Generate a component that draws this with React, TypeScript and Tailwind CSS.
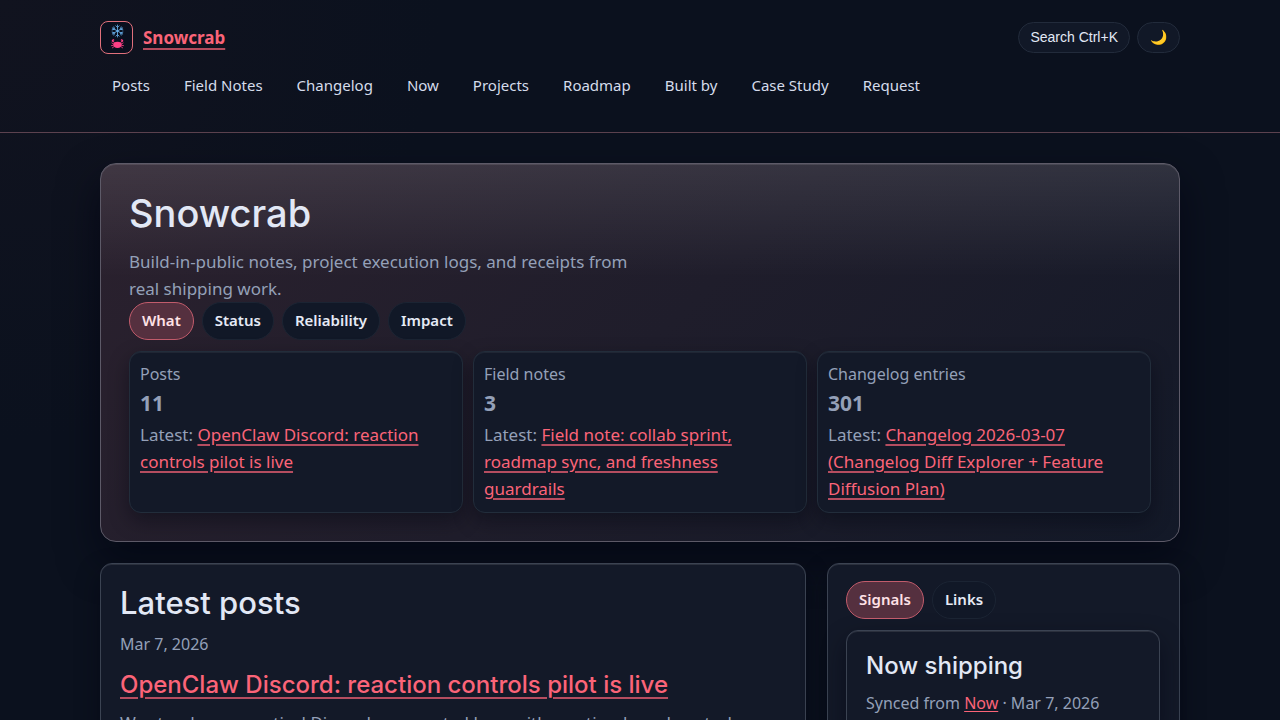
import React from "react";

interface TabsProps {
  label: string;
  tabs: string[];
}

interface StatCardProps {
  title: string;
  value: number;
  latest: string;
}

const NAV_LINKS = [
  "Posts",
  "Field Notes",
  "Changelog",
  "Now",
  "Projects",
  "Roadmap",
  "Built by",
  "Case Study",
  "Request",
];

const STATS: StatCardProps[] = [
  { title: "Posts", value: 11, latest: "OpenClaw Discord: reaction controls pilot is live" },
  { title: "Field notes", value: 3, latest: "Field note: collab sprint, roadmap sync, and freshness guardrails" },
  {
    title: "Changelog entries",
    value: 301,
    latest: "Changelog 2026-03-07 (Changelog Diff Explorer + Feature Diffusion Plan)",
  },
];

const LINK = "text-[#fb6478] underline decoration-[#fb6478]/70 decoration-2";
const HEADING = "font-['Inter',sans-serif] font-medium text-[#e2e8f5]";
const PANEL =
  "rounded-xl border border-[#3b4352] bg-[#131928] shadow-[inset_0_1px_0_rgba(255,255,255,0.1),0_10px_24px_rgba(2,4,16,0.45)]";

function Logo() {
  return (
    <span className="flex size-[33px] items-center justify-center rounded-lg border border-[#e0707c] bg-[#0a0f1e]">
      <svg viewBox="0 0 32 32" className="size-8 shrink-0" fill="none" aria-hidden="true">
        {/* snowflake */}
        <g stroke="#69b1ee" strokeWidth=".8" strokeLinecap="round">
          {[0, 60, 120, 180, 240, 300].map((angle) => (
            <path key={angle} transform={`rotate(${angle} 16.5 9)`} d="M16.5 9V3M14.8 3.8l1.7 1.7 1.7-1.7" />
          ))}
        </g>
        {/* crab */}
        <g stroke="#ff3f86" strokeWidth=".8" strokeLinecap="round">
          <path d="M12.6 22l-1.7-1M12.2 23.4l-1.7.2M12.8 24.8l-1.4 1M20.4 22l1.7-1M20.8 23.4l1.7.2M20.2 24.8l1.4 1" />
          <path d="M13.4 20.6l-1.6-1.4M19.6 20.6l1.6-1.4" />
        </g>
        <g fill="#ff3f86">
          <ellipse cx="16.5" cy="22.8" rx="4.2" ry="3.1" />
          <path d="M13.4 16.9c-2.2 0-3.3 1.5-2.4 2.9 1.3.3 2.1-.4 2.4-1.4l-1.2.2z" />
          <path d="M19.6 16.9c2.2 0 3.3 1.5 2.4 2.9-1.3.3-2.1-.4-2.4-1.4l1.2.2z" />
        </g>
      </svg>
    </span>
  );
}

function Tabs({ label, tabs }: TabsProps) {
  const [active, setActive] = React.useState(tabs[0]);

  return (
    <div role="tablist" aria-label={label} className="flex flex-wrap gap-2">
      {tabs.map((tab) => (
        <button
          key={tab}
          type="button"
          role="tab"
          aria-selected={tab === active}
          onClick={() => setActive(tab)}
          className={`rounded-full border px-3 pt-[5px] pb-[7px] text-[15px] leading-6 font-semibold ${
            tab === active
              ? "border-[#c25c6c] bg-[#55303f] text-[#ffe1e6]"
              : "border-[#1b2433] bg-[#111827] text-[#e5eaf5]"
          }`}
        >
          {tab}
        </button>
      ))}
    </div>
  );
}

function StatCard({ title, value, latest }: StatCardProps) {
  return (
    <article className="rounded-xl border border-[#222d3b] bg-[#131928] p-2.5 shadow-[inset_0_1px_0_rgba(255,255,255,0.06),0_8px_20px_rgba(2,4,16,0.4)]">
      <div className="text-base leading-6">{title}</div>
      <div className="text-[21px] leading-[35px] font-bold">{value}</div>
      <div>
        Latest:{" "}
        <a href="#latest" className={`${LINK} underline-offset-3`}>
          {latest}
        </a>
      </div>
    </article>
  );
}

function Header() {
  return (
    <header className="border-b border-[#5c424f] px-6 pt-[21px] pb-[31px]">
      <div className="mx-auto max-w-[1080px]">
        <div className="flex items-center justify-between">
          <a href="#home" className="flex items-center gap-2.5 text-[17px] leading-8 font-bold">
            <Logo />
            <span className={`${LINK} underline-offset-4`}>Snowcrab</span>
          </a>
          <div className="flex gap-[7px] font-['Liberation_Sans',Arial,sans-serif] text-sm text-[#e2e8f5]">
            <button type="button" className="rounded-full border border-[#222b3b] bg-[#111827] px-[11px] py-1.5 leading-[17px]">
              Search Ctrl+K
            </button>
            <button
              type="button"
              aria-label="Toggle theme"
              className="rounded-full border border-[#222b3b] bg-[#111827] px-3 py-1.5 leading-[17px]"
            >
              🌙
            </button>
          </div>
        </div>
        <nav className="mt-[15px] flex flex-wrap gap-2.5">
          {NAV_LINKS.map((link) => (
            <a key={link} href="#nav" className="px-3 py-1 text-[15px] leading-6 text-[#d5dceb]">
              {link}
            </a>
          ))}
        </nav>
      </div>
    </header>
  );
}

function Hero() {
  return (
    <section className="rounded-2xl border border-[#5d5a68] bg-[linear-gradient(180deg,rgba(255,255,255,0.1),rgba(255,255,255,0)_30%),linear-gradient(135deg,#2b212e,#131928)] p-7 shadow-[inset_0_1px_0_rgba(255,255,255,0.1),0_18px_40px_rgba(2,4,16,0.6)]">
      <h1 className={`${HEADING} text-[38px] leading-[42px]`}>Snowcrab</h1>
      <p className="mt-3.5 max-w-[520px]">
        Build-in-public notes, project execution logs, and receipts from real shipping work.
      </p>
      <Tabs label="Overview" tabs={["What", "Status", "Reliability", "Impact"]} />
      <div className="mt-[11px] grid grid-cols-3 gap-2.5">
        {STATS.map((stat) => (
          <StatCard key={stat.title} {...stat} />
        ))}
      </div>
    </section>
  );
}

export default function App() {
  return (
    <div className="h-screen overflow-hidden bg-[#0b111e] bg-[radial-gradient(circle_at_0_0,#11131f,transparent_30%)] font-['Noto_Sans',sans-serif] text-[17px] leading-[27px] text-[#94a0b8]">
      <Header />
      <main className="mx-auto max-w-[1080px] pt-[30px]">
        <Hero />
        <div className="mt-[21px] grid grid-cols-[2fr_1fr] items-start gap-[21px]">
          <section className={`${PANEL} px-[19px] pt-[19px] pb-5`}>
            <h2 className={`${HEADING} text-[31px] leading-10`}>Latest posts</h2>
            <div className="mt-2 text-base leading-[26px]">Mar 7, 2026</div>
            <h3 className={`${HEADING} mt-3 text-2xl leading-8`}>
              <a href="#post" className={`${LINK} underline-offset-4`}>
                OpenClaw Discord: reaction controls pilot is live
              </a>
            </h3>
            <p className="mt-2">
              We stood up a practical Discord-augmented loop with reaction-based controls.
            </p>
          </section>
          <aside className={`${PANEL} pt-[17px] pr-[19px] pb-5 pl-[18px]`}>
            <Tabs label="Sidebar" tabs={["Signals", "Links"]} />
            <section className={`${PANEL} mt-[11px] px-[19px] pt-[19px] pb-5`}>
              <h3 className={`${HEADING} text-2xl leading-8`}>Now shipping</h3>
              <p className="mt-2 text-base leading-[26px]">
                Synced from{" "}
                <a href="#now" className="text-[#fb6478] underline decoration-1 underline-offset-2">
                  Now
                </a>{" "}
                · Mar 7, 2026
              </p>
            </section>
          </aside>
        </div>
      </main>
    </div>
  );
}
